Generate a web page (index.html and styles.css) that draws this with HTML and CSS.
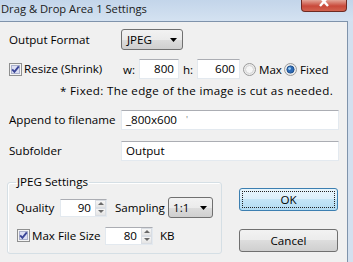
FILE: index.html
```html
<!DOCTYPE html>
<html lang="en">
<head>
  <meta charset="UTF-8">
  <title>Drag &amp; Drop Area 1 Settings</title>
  <link rel="stylesheet" href="styles.css">
</head>
<body>
  <div class="window">
    <!-- title bar -->
    <div class="titlebar">
      <span class="title">Drag &amp; Drop Area 1 Settings</span>
      <span class="close-btn">
        <svg width="12" height="7" viewBox="0 0 12 7"><path d="M2 -3L10 6M10 -3L2 6" stroke="#fff" stroke-width="2.4"/></svg>
      </span>
    </div>

    <div class="frame-body">
      <div class="client">
        <!-- output format -->
        <div class="row row-format">
          <span class="field-label">Output Format</span>
          <div class="combo combo-format">
            <span>JPEG</span>
            <svg class="arrow" width="7" height="4" viewBox="0 0 7 4"><path d="M0 0H7L3.5 4Z" fill="#000"/></svg>
          </div>
        </div>

        <!-- resize -->
        <div class="row row-resize">
          <span class="field-label check-label">
            <svg class="check" width="13" height="13" viewBox="0 0 13 13">
              <rect x="0.5" y="0.5" width="12" height="12" fill="#f4f4f4" stroke="#8e8f8f"/>
              <rect x="2.5" y="2.5" width="8" height="8" fill="#dcdff3" stroke="#aab0cc"/>
              <path d="M3.2 6.4L5.4 8.8L9.8 3.4" fill="none" stroke="#3a4597" stroke-width="1.9"/>
            </svg>
            Resize (Shrink)
          </span>
          <span class="dim-label">w:</span>
          <div class="textbox num box-w">800</div>
          <span class="dim-label dim-h">h:</span>
          <div class="textbox num box-h">600</div>
          <span class="radio radio-max">
            <svg width="13" height="13" viewBox="0 0 13 13">
              <circle cx="6.5" cy="6.5" r="6" fill="#ececec" stroke="#9a9a9a"/>
              <circle cx="6.5" cy="6.5" r="4" fill="#f6f6f6" stroke="#d4d4d4"/>
            </svg>
            Max
          </span>
          <span class="radio">
            <svg width="13" height="13" viewBox="0 0 13 13">
              <circle cx="6.5" cy="6.5" r="6" fill="#ececec" stroke="#9a9a9a"/>
              <circle cx="6.5" cy="6.5" r="3.6" fill="#2f6cb7" stroke="#1d4f8c"/>
              <circle cx="5.6" cy="5.6" r="1.4" fill="#9fd0f4"/>
            </svg>
            Fixed
          </span>
        </div>

        <p class="note">* Fixed: The edge of the image is cut as needed.</p>

        <!-- filename / subfolder -->
        <div class="row row-text">
          <span class="field-label">Append to filename</span>
          <div class="textbox wide">_800x600 <span class="tick">'</span></div>
        </div>
        <div class="row row-text">
          <span class="field-label">Subfolder</span>
          <div class="textbox wide">Output</div>
        </div>

        <div class="bottom">
          <fieldset class="group">
            <legend>JPEG Settings</legend>
            <div class="group-row">
              <span class="q-label">Quality</span>
              <div class="spin spin-q">
                <span class="spin-val">90</span>
                <span class="spin-btns">
                  <i class="spin-up"></i>
                  <i class="spin-down"></i>
                </span>
              </div>
              <span class="s-label">Sampling</span>
              <div class="combo combo-sampling">
                <span>1:1</span>
                <svg class="arrow" width="7" height="4" viewBox="0 0 7 4"><path d="M0 0H7L3.5 4Z" fill="#000"/></svg>
              </div>
            </div>
            <div class="group-row row-size">
              <span class="check-label size-label">
                <svg class="check" width="13" height="13" viewBox="0 0 13 13">
                  <rect x="0.5" y="0.5" width="12" height="12" fill="#f4f4f4" stroke="#8e8f8f"/>
                  <rect x="2.5" y="2.5" width="8" height="8" fill="#dcdff3" stroke="#aab0cc"/>
                  <path d="M3.2 6.4L5.4 8.8L9.8 3.4" fill="none" stroke="#3a4597" stroke-width="1.9"/>
                </svg>
                Max File Size
              </span>
              <div class="spin spin-kb">
                <span class="spin-val">80</span>
                <span class="spin-btns">
                  <i class="spin-up"></i>
                  <i class="spin-down"></i>
                </span>
              </div>
              <span class="kb">KB</span>
            </div>
          </fieldset>

          <div class="buttons">
            <button class="btn btn-default"><span class="focus">OK</span></button>
            <button class="btn">Cancel</button>
          </div>
        </div>
      </div>
      <div class="frame"></div>
    </div>
  </div>
</body>
</html>
```

FILE: styles.css
```css
body {
  margin: 0;
  font-family: "Open Sans", "Noto Sans", sans-serif;
  font-size: 11.6px;
  color: #000;
  background: #f0f0f0;
}

.window {
  width: 353px;
  height: 262px;
  display: flex;
  flex-direction: column;
  background: #d3e0ef;
  overflow: hidden;
}

/* title bar */
.titlebar {
  height: 21px;
  flex: none;
  display: flex;
  align-items: flex-start;
  background: linear-gradient(#c3d5ea, #d4e2f1);
}

.title {
  flex: 1;
  margin-top: 1px;
  padding-left: 1px;
  font-size: 11.2px;
  line-height: 16px;
  color: #1b1b1b;
}

.close-btn {
  width: 44px;
  height: 11px;
  margin-right: 6px;
  border: 1px solid #6e2a22;
  border-top: 0;
  border-radius: 0 0 4px 4px;
  background: linear-gradient(#e3a597, #c9493a 55%, #d2634f);
  display: flex;
  justify-content: center;
  align-items: flex-start;
}

.frame-body {
  flex: 1;
  display: flex;
}

.client {
  flex: 1;
  background: #f0f0f0;
  border-top: 1px solid #7f93ab;
  border-right: 1px solid #7f93ab;
  padding-left: 9px;
}

.frame {
  width: 5px;
}

/* rows */
.row {
  display: flex;
  align-items: center;
}

.field-label {
  width: 112px;
  flex: none;
  line-height: 16px;
}

.check-label {
  display: flex;
  align-items: center;
  gap: 2px;
}

.row-format {
  margin-top: 7px;
  height: 21px;
}

.combo {
  box-sizing: border-box;
  height: 21px;
  border: 1px solid #707070;
  border-radius: 3px;
  background: linear-gradient(#f2f2f2, #ebebeb 50%, #dddddd 50%, #cfcfcf);
  display: flex;
  align-items: center;
  justify-content: space-between;
  padding: 0 5px 0 5px;
}

.combo-format {
  width: 62px;
}

.row-resize {
  margin-top: 8px;
  height: 22px;
}

.dim-label {
  box-sizing: border-box;
  width: 18px;
  padding-left: 2px;
}

.dim-h {
  padding-left: 4px;
}

.textbox {
  box-sizing: border-box;
  height: 20px;
  background: #fff;
  border: 1px solid #e3e9ef;
  border-top-color: #abadb3;
  line-height: 18px;
  padding: 0 4px;
}

.num {
  text-align: right;
}

.box-w {
  width: 40px;
}

.box-h {
  width: 43px;
}

.radio {
  display: flex;
  align-items: center;
  gap: 3px;
}

.radio-max {
  width: 41px;
  margin-left: 3px;
}

.note {
  margin: 3px 0 0 51px;
  line-height: 16px;
  letter-spacing: 0.33px;
}

.row-text {
  margin-top: 11px;
}

.wide {
  width: 218px;
}

.tick {
  color: #777;
  font-size: 9px;
  vertical-align: top;
  margin-left: 6px;
}

/* jpeg settings group */
.bottom {
  display: flex;
  margin-top: 13px;
  margin-left: -2px;
}

.group {
  box-sizing: border-box;
  width: 215px;
  margin: 0;
  padding: 7px 8px 8px 8px;
  border: 1px solid #d5dfe5;
  border-radius: 3px;
  box-shadow: inset 1px 1px 0 #fff;
}

.group legend {
  padding: 0 1px;
  margin-left: 0;
  line-height: 16px;
}

.group-row {
  display: flex;
  align-items: center;
  height: 21px;
}

.q-label {
  width: 44px;
}

.spin {
  box-sizing: border-box;
  height: 18px;
  background: #fff;
  border: 1px solid #e3e9ef;
  border-top-color: #abadb3;
  display: flex;
}

.spin-q {
  width: 47px;
}

.spin-kb {
  width: 48px;
}

.spin-val {
  flex: 1;
  text-align: right;
  padding-right: 4px;
  line-height: 16px;
}

.spin-btns {
  width: 11px;
  display: flex;
  flex-direction: column;
}

.spin-btns i {
  flex: 1;
  border: 1px solid #d9dde3;
  background: linear-gradient(#f6f6f6, #e4e4e4);
  display: flex;
  align-items: center;
  justify-content: center;
}

.spin-btns i::before {
  content: "";
  border-left: 3px solid transparent;
  border-right: 3px solid transparent;
}

.spin-up::before {
  border-bottom: 3px solid #6a6a6a;
}

.spin-down::before {
  border-top: 3px solid #6a6a6a;
}

.s-label {
  margin-left: 8px;
  width: 53px;
}

.combo-sampling {
  width: 45px;
  padding-left: 4px;
}

.row-size {
  margin-top: 8px;
  height: 19px;
}

.size-label {
  width: 88px;
  margin-left: 1px;
}

.kb {
  margin-left: 7px;
}

/* buttons */
.buttons {
  margin-left: 17px;
  margin-top: 14px;
  display: flex;
  flex-direction: column;
  gap: 18px;
}

.btn {
  width: 99px;
  height: 23px;
  padding: 0;
  font: inherit;
  color: #000;
  border: 1px solid #707070;
  border-radius: 3px;
  background: linear-gradient(#f2f2f2, #ebebeb 50%, #dddddd 50%, #cfcfcf);
}

.btn-default {
  border-color: #3c7fb1;
  background: linear-gradient(#e8f5fc, #dbeffb 50%, #c4e5f7 50%, #b2dbf2);
  padding: 2px;
}

.focus {
  display: block;
  height: 100%;
  box-sizing: border-box;
  outline: 1px dotted #222;
  outline-offset: -1px;
  line-height: 17px;
}
```
